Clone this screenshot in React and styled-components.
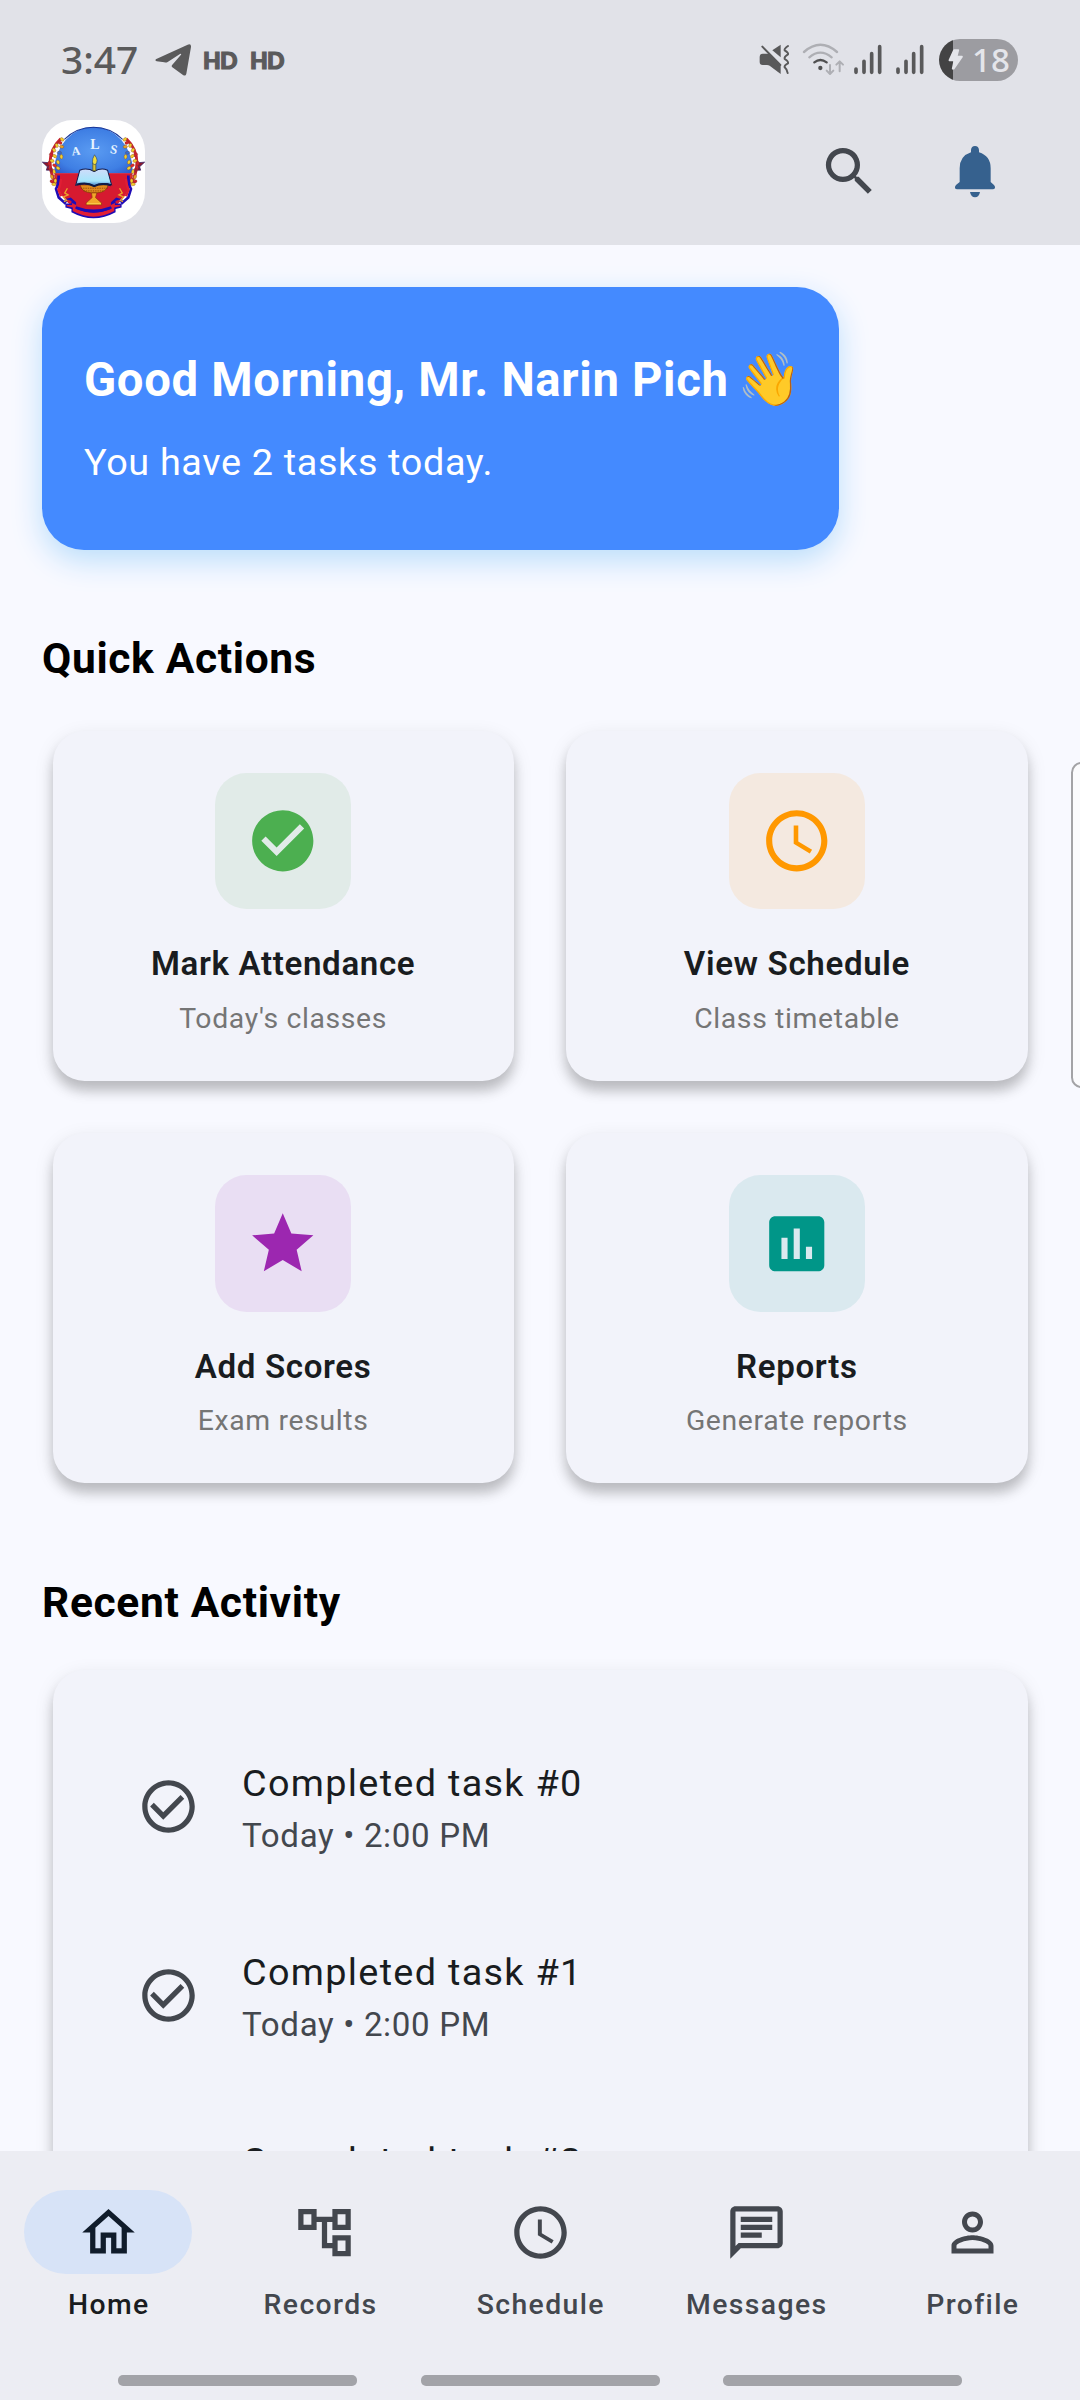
import React from "react";
import styled, { createGlobalStyle } from "styled-components";
import {
  MdCheckCircle,
  MdAccessTime,
  MdStar,
  MdAssessment,
  MdCheckCircleOutline,
  MdOutlineHome,
  MdOutlineAccountTree,
  MdSearch,
  MdOutlineChat,
  MdPersonOutline,
} from "react-icons/md";

const GlobalStyle = createGlobalStyle`
  *, *::before, *::after { box-sizing: border-box; }
  body {
    margin: 0;
    background: #f8f9ff;
    font-family: Roboto, "Noto Sans", sans-serif;
    letter-spacing: 0.656px;
    color: #191c20;
  }
  svg { display: block; flex: none; }
`;

const Screen = styled.div`
  width: 1080px;
  height: 2400px;
  display: flex;
  flex-direction: column;
  overflow: hidden;
  background: #f8f9ff;
`;

/* ---------- header ---------- */

const Header = styled.header`
  flex: none;
  height: 245px;
  background: #e1e2e8;
`;

const StatusBar = styled.div`
  height: 120px;
  padding: 0 62px 0 61px;
  display: flex;
  align-items: center;
  justify-content: space-between;
  color: #5a5a5b;
`;

const StatusGroup = styled.div`
  display: flex;
  align-items: center;
`;

const Clock = styled.span`
  width: 94px;
  padding-bottom: 2px;
  font: 500 38.9px/54px "Noto Sans", sans-serif;
  letter-spacing: 0;
`;

const HdBadge = styled.span`
  width: 47px;
  font: 900 23px/28px Lato, sans-serif;
  letter-spacing: -0.9px;
  -webkit-text-stroke: 1.2px #5a5a5b;
`;

const Battery = styled.div`
  width: 79px;
  height: 42px;
  margin-left: 2px;
  border-radius: 21px;
  display: flex;
  align-items: center;
  background: linear-gradient(to right, #434344 14px, #9c9ca1 14px);
  color: #e4e5ea;
`;

const BatteryLevel = styled.span`
  margin-left: 7px;
  font: 500 33px/42px "Noto Sans", sans-serif;
  letter-spacing: 0;
`;

const AppBar = styled.div`
  height: 103px;
  padding: 0 42px;
  display: flex;
  align-items: center;
`;

const LogoTile = styled.div`
  width: 103px;
  height: 103px;
  margin-right: auto;
  border-radius: 31px;
  overflow: hidden;
  background: #fff;
`;

const IconButton = styled.button`
  width: 126px;
  height: 103px;
  padding: 0;
  border: 0;
  background: none;
  display: grid;
  place-items: center;
  color: ${(p) => p.$color};
`;

/* ---------- body ---------- */

const Body = styled.main`
  flex: 1;
  min-height: 0;
  overflow: hidden;
  position: relative;
  padding: 42px 42px 0;
  display: flex;
  flex-direction: column;
  align-items: stretch;
`;

const Banner = styled.section`
  flex: none;
  width: 797px;
  height: 262.5px;
  padding: 58px 0 0 42px;
  border-radius: 42px;
  background: #448aff;
  box-shadow: 0 10.5px 30px #bbdefb;
  color: #fff;
`;

const Greeting = styled.h1`
  margin: 0;
  height: 70px;
  display: flex;
  align-items: center;
  white-space: pre;
  font-size: 47.25px;
  line-height: 70px;
  font-weight: 700;
`;

const Emoji = styled.span`
  margin-left: -4px;
  font-size: 52px;
  font-family: "Noto Color Emoji", sans-serif;
`;

const BannerText = styled.p`
  margin: 22px 0 0;
  font-size: 37.8px;
  line-height: 50px;
`;

const SectionTitle = styled.h2`
  flex: none;
  margin: ${(p) => p.$top}px 0 ${(p) => p.$bottom}px;
  font-size: 42.5px;
  line-height: 56px;
  font-weight: 700;
  color: #000;
`;

const ActionGrid = styled.div`
  flex: none;
  padding: 0 10.5px;
  display: grid;
  grid-template-columns: 1fr 1fr;
  gap: 52.5px;
`;

const Card = styled.div`
  border-radius: 31.5px;
  background: #f2f3fa;
  box-shadow: 0 10px 12px rgba(0, 0, 0, 0.19), 0 6px 20px rgba(0, 0, 0, 0.1);
`;

const ActionCard = styled(Card)`
  height: 350px;
  padding-top: 42px;
  display: flex;
  flex-direction: column;
  align-items: center;
`;

const ActionIcon = styled.div`
  width: 136.5px;
  height: 136.5px;
  border-radius: 31.5px;
  display: grid;
  place-items: center;
  color: ${(p) => p.$color};
  background: ${(p) => p.$tint};
`;

const ActionTitle = styled.div`
  margin-top: 31px;
  font-size: 33.1px;
  line-height: 48px;
  font-weight: 600;
`;

const ActionNote = styled.div`
  margin-top: 12.5px;
  font-size: 28.35px;
  line-height: 36px;
  color: #757575;
`;

const ActivityCard = styled(Card)`
  flex: none;
  margin: 0 10.5px;
  padding: 42px;
`;

const ActivityRow = styled.div`
  height: 189px;
  padding: 0 42px;
  display: flex;
  align-items: center;
  gap: 42.5px;
  color: #43474e;
`;

const ActivityText = styled.div`
  padding-top: 2px;
`;

const ActivityName = styled.div`
  font-size: 37.8px;
  line-height: 50px;
  letter-spacing: 1.3125px;
  color: #191c20;
`;

const ActivityTime = styled.div`
  margin-top: 7px;
  font-size: 33.1px;
  line-height: 42px;
`;

const EdgePanel = styled.div`
  position: absolute;
  top: 517px;
  right: -12px;
  width: 21px;
  height: 326px;
  border: 2px solid #a3a3a6;
  border-radius: 12px;
  background: #fbfbfd;
`;

/* ---------- bottom navigation ---------- */

const NavBar = styled.nav`
  flex: none;
  height: 249px;
  padding-top: 39px;
  display: flex;
  flex-direction: column;
  justify-content: space-between;
  background: #ecedf3;
`;

const NavItems = styled.div`
  display: grid;
  grid-template-columns: repeat(5, 1fr);
`;

const NavItem = styled.div`
  display: flex;
  flex-direction: column;
  align-items: center;
  color: ${(p) => (p.$active ? "#101c2b" : "#43474e")};
`;

const NavIndicator = styled.div`
  width: 168px;
  height: 84px;
  border-radius: 42px;
  display: grid;
  place-items: center;
  background: ${(p) => (p.$active ? "#d7e3f7" : "transparent")};
`;

const NavLabel = styled.span`
  margin-top: 13px;
  padding-left: 1.6px;
  white-space: pre;
  font-size: 28.35px;
  line-height: 36px;
  letter-spacing: 1.4px;
  font-weight: 500;
  color: ${(p) => (p.$active ? "#191c20" : "#43474e")};
`;

const GestureHints = styled.div`
  display: flex;
  gap: 63.5px;
  padding: 0 0 14px 118px;
`;

const GestureHint = styled.span`
  width: 239px;
  height: 11px;
  border-radius: 5px;
  background: #a2a3a8;
`;

/* ---------- drawings ---------- */

function TelegramGlyph() {
  return (
    <svg width="48" height="34" viewBox="0 0 144 102" fill="#5a5a5b">
      <path d="M4 48 98 5q11-4 10 7l-14 80q-2 9-10 4L52 73q-4-4 0-8l26-30q2-4-3-2L38 57q-5 3-10 1L5 55q-7-3-1-7Z" />
    </svg>
  );
}

function MuteVibrateGlyph() {
  return (
    <svg width="32" height="34" viewBox="118 132 96 102" fill="#59595a">
      <path d="M120 174q0-10 9-10h19l35 37v24l-33-25q-3-2-8-2h-13q-9 0-9-9Z" />
      <path d="M158 154 183 137v38Z" />
      <path d="m128 143 54 55" stroke="#59595a" strokeWidth="6" strokeLinecap="round" />
      <path
        d="M205 141q-12 8-10 13 12 7 10 12-12 7-10 14 12 7 10 13-12 6-10 12 8 7 9 17"
        fill="none"
        stroke="#59595a"
        strokeWidth="6"
        strokeLinecap="round"
        strokeLinejoin="round"
      />
    </svg>
  );
}

const WifiSlot = styled.div`
  margin: 0 6.7px 0 11px;
`;

function WifiGlyph() {
  return (
    <svg width="44" height="34" viewBox="247 132 132 102" fill="none" strokeLinecap="round">
      <path d="M253 159q49-43 99 0" stroke="#aeafb4" strokeWidth="7" />
      <path d="M269 175q33-28 67 0" stroke="#aeafb4" strokeWidth="7" />
      <path d="M284 190q18-14 37 0" stroke="#505051" strokeWidth="7" />
      <circle cx="302" cy="207" r="6.5" fill="#505051" />
      <path
        d="M331 198v26m-10-9 10 10 10-10M360 217v-28m-10 8 10-10 10 10"
        stroke="#aeafb4"
        strokeWidth="6"
        strokeLinejoin="round"
      />
    </svg>
  );
}

function SignalGlyph() {
  return (
    <svg width="42" height="34" viewBox="-6 132 126 102" stroke="#59595a" strokeWidth="11" strokeLinecap="round">
      <path d="M3 210v10M27 187v33M50 164v56M74 143v77" />
    </svg>
  );
}

function BoltGlyph() {
  return (
    <svg width="26" height="30" viewBox="657 136 78 90" fill="#e4e5ea">
      <path
        d="M702 151h13l-5 20h16l-25 36h-3l5-25h-15Z"
        stroke="#e4e5ea"
        strokeWidth="5"
        strokeLinejoin="round"
      />
    </svg>
  );
}

function BellGlyph() {
  return (
    <svg width="42" height="54" viewBox="702 436 126 162" fill="currentColor">
      <path d="M753 458v-7q1-12 12-12t12 12v7q35 11 35 48v41l10 9q4 4 3 9-2 4-7 4H712q-6 0-7-4-1-5 3-9l11-9v-41q0-37 34-48Z" />
      <path d="M750 577h30q-3 16-15 16t-15-16Z" />
    </svg>
  );
}

const leaves = [
  [96, 88, "#f3cf2b"], [90, 98, "#d3202c"], [80, 106, "#f3cf2b"], [95, 110, "#e9a424"],
  [72, 120, "#f3cf2b"], [88, 128, "#2f6fdc"], [64, 134, "#d3202c"], [74, 138, "#f3cf2b"],
  [94, 140, "#f3cf2b"], [84, 156, "#f3cf2b"], [66, 152, "#f3cf2b"], [58, 160, "#d3202c"],
  [74, 166, "#e02a2a"], [84, 174, "#f3cf2b"], [72, 184, "#f3cf2b"], [64, 180, "#a31d33"],
  [78, 198, "#e02a2a"], [66, 200, "#e9a424"], [66, 214, "#d3202c"], [76, 212, "#f3cf2b"],
  [72, 222, "#f3cf2b"],
];

function Wreath() {
  return (
    <g>
      <path d="m37 156 22 2-3 14 10 8-17 0 3-10Z" fill="#8e1a2c" stroke="#241560" strokeWidth="2" />
      <path d="M92 86Q60 116 60 160q2 34 18 60" fill="none" stroke="#c8242f" strokeWidth="9" />
      {leaves.map(([x, y, c]) => (
        <ellipse
          key={`${x}-${y}`}
          cx={x}
          cy={y}
          rx="6.5"
          ry="4.5"
          fill={c}
          stroke="#7a3a20"
          strokeWidth="1"
          transform={`rotate(${(x * 7 + y * 3) % 90} ${x} ${y})`}
        />
      ))}
      <path d="M86 196q0 26-8 40l8 26 18 16 6-12" fill="none" stroke="#1f0bb5" strokeWidth="8" />
      <path d="M93 206q-2 22-8 32l8 20" fill="none" stroke="#e01e33" strokeWidth="7" />
      <path d="m112 234-8 14 10 6-14 6 10 10-8 4" fill="none" stroke="#eba52a" strokeWidth="4" />
    </g>
  );
}

const Letter = styled.text`
  font: 700 ${(p) => p.$size}px "Liberation Serif", serif;
  letter-spacing: 0;
  fill: #e4f3ff;
`;

function SchoolLogo() {
  return (
    <svg width="103" height="103" viewBox="36 30 308 308">
      <defs>
        <clipPath id="disc">
          <ellipse cx="190" cy="180" rx="117" ry="129" />
        </clipPath>
        <radialGradient id="sky" cx="0.5" cy="0.55" r="0.6">
          <stop offset="0" stopColor="#5a9bf2" />
          <stop offset="0.7" stopColor="#3f7fe4" />
          <stop offset="1" stopColor="#2c5bcb" />
        </radialGradient>
        <linearGradient id="page" x1="0" y1="0" x2="0" y2="1">
          <stop offset="0" stopColor="#cfdcfa" />
          <stop offset="0.7" stopColor="#a6e6fb" />
          <stop offset="1" stopColor="#3b78c4" />
        </linearGradient>
      </defs>
      <g clipPath="url(#disc)">
        <rect x="60" y="40" width="260" height="150" fill="url(#sky)" />
        <rect x="60" y="189" width="260" height="130" fill="#d61a30" />
      </g>
      <path d="M103 88Q140 52 190 52t87 36" fill="none" stroke="#173597" strokeWidth="3" />
      <Wreath />
      <g transform="matrix(-1 0 0 1 380 0)">
        <Wreath />
      </g>
      <path
        d="M106 292v-12h18v-8l-16-6 14-4 16 14v12q52 20 104 0v-12l16-14 14 4-16 6v8h18v12l-18 4v10q-66 36-132 0v-10Z"
        fill="#1f0bb5"
      />
      <path
        d="M110 284h16v-6l12 6v12q52 22 104 0v-12l12-6v6h16v4l-18 4v10q-62 34-124 0v-10l-18-4Z"
        fill="#e01f35"
      />
      <path d="M136 292q54 24 108 0" fill="none" stroke="#1f0bb5" strokeWidth="5" />
      <Letter $size={36} x="126" y="136" transform="rotate(-6 126 136)">A</Letter>
      <Letter $size={42} x="180" y="118">L</Letter>
      <Letter $size={38} x="238" y="128" transform="rotate(12 238 128)">S</Letter>
      <path d="M150 224h84q-4 22-34 24h-16q-30-2-34-24Z" fill="#e08c1e" stroke="#7a3208" strokeWidth="2" />
      <path d="M152 234h80M160 242h62" stroke="#7a3208" strokeWidth="2" strokeDasharray="4 3" />
      <path d="M184 248h16l-4 14 18 16v6h-46v-6l18-16Z" fill="#f2a82a" stroke="#8b3a0a" strokeWidth="2" />
      <path d="M170 280h42" stroke="#ffe05a" strokeWidth="2" />
      <path
        d="M149 180q22-8 43 4 20-12 40-4l12 44q-30-10-52 4-22-14-55-3Z"
        fill="url(#page)"
        stroke="#131b4c"
        strokeWidth="3"
      />
      <path d="M141 223q30-8 51 5 22-12 50-3" fill="none" stroke="#0f1c46" strokeWidth="6" />
      <path d="M188 158h9v24h-9Z" fill="#dcc43c" stroke="#4a4a1c" strokeWidth="2" />
      <path d="M193 134q14 18 3 29-8 2-9-8-1-9 6-21Z" fill="#f3dd3c" stroke="#2b4a6c" strokeWidth="2" />
    </svg>
  );
}

/* ---------- data ---------- */

const actions = [
  { title: "Mark Attendance", note: "Today's classes", Icon: MdCheckCircle, color: "#4caf50", tint: "#e1ebe8" },
  { title: "View Schedule", note: "Class timetable", Icon: MdAccessTime, color: "#ff9800", tint: "#f4e9e0" },
  { title: "Add Scores", note: "Exam results", Icon: MdStar, color: "#9c27b0", tint: "#e9def3" },
  { title: "Reports", note: "Generate reports", Icon: MdAssessment, color: "#009688", tint: "#dae9ef" },
];

const activities = [0, 1, 2];

const tabs = [
  { label: "Home", Icon: MdOutlineHome, active: true },
  { label: "Records\u00a0", Icon: MdOutlineAccountTree },
  { label: "Schedule", Icon: MdAccessTime },
  { label: "Messages", Icon: MdOutlineChat },
  { label: "Profile", Icon: MdPersonOutline },
];

export default function App() {
  return (
    <Screen>
      <GlobalStyle />
      <Header>
        <StatusBar>
          <StatusGroup>
            <Clock>3:47</Clock>
            <TelegramGlyph />
            <HdBadge>HD</HdBadge>
            <HdBadge>HD</HdBadge>
          </StatusGroup>
          <StatusGroup>
            <MuteVibrateGlyph />
            <WifiSlot>
              <WifiGlyph />
            </WifiSlot>
            <SignalGlyph />
            <SignalGlyph />
            <Battery>
              <BoltGlyph />
              <BatteryLevel>18</BatteryLevel>
            </Battery>
          </StatusGroup>
        </StatusBar>
        <AppBar>
          <LogoTile>
            <SchoolLogo />
          </LogoTile>
          <IconButton $color="#43474e" aria-label="Search">
            <MdSearch size={63} />
          </IconButton>
          <IconButton $color="#36618e" aria-label="Notifications">
            <BellGlyph />
          </IconButton>
        </AppBar>
      </Header>

      <Body>
        <Banner>
          <Greeting>
            Good Morning, Mr. Narin Pich <Emoji>👋</Emoji>
          </Greeting>
          <BannerText>You have 2 tasks today.</BannerText>
        </Banner>

        <SectionTitle $top={81} $bottom={44.3}>Quick Actions</SectionTitle>
        <ActionGrid>
          {actions.map(({ title, note, Icon, color, tint }) => (
            <ActionCard key={title}>
              <ActionIcon $color={color} $tint={tint}>
                <Icon size={73.5} />
              </ActionIcon>
              <ActionTitle>{title}</ActionTitle>
              <ActionNote>{note}</ActionNote>
            </ActionCard>
          ))}
        </ActionGrid>

        <SectionTitle $top={92} $bottom={39}>Recent Activity</SectionTitle>
        <ActivityCard>
          {activities.map((n) => (
            <ActivityRow key={n}>
              <MdCheckCircleOutline size={63} />
              <ActivityText>
                <ActivityName>Completed task #{n}</ActivityName>
                <ActivityTime>Today • 2:00 PM</ActivityTime>
              </ActivityText>
            </ActivityRow>
          ))}
        </ActivityCard>
        <EdgePanel />
      </Body>

      <NavBar>
        <NavItems>
          {tabs.map(({ label, Icon, active }) => (
            <NavItem key={label} $active={active}>
              <NavIndicator $active={active}>
                <Icon size={63} />
              </NavIndicator>
              <NavLabel $active={active}>{label}</NavLabel>
            </NavItem>
          ))}
        </NavItems>
        <GestureHints>
          <GestureHint />
          <GestureHint />
          <GestureHint />
        </GestureHints>
      </NavBar>
    </Screen>
  );
}
